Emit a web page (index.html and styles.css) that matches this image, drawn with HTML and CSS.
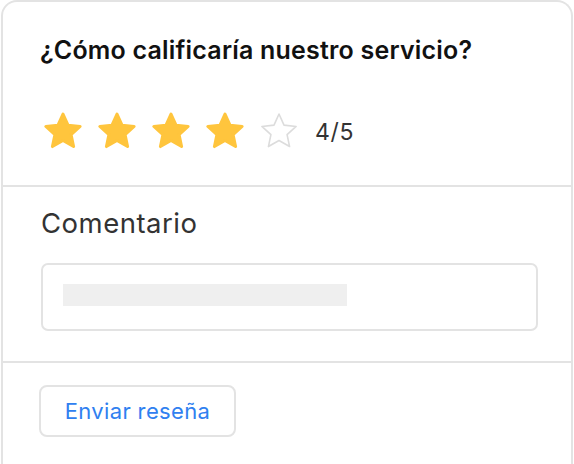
FILE: index.html
```html
<!DOCTYPE html>
<html lang="es">
<head>
<meta charset="utf-8">
<title>Reseña</title>
<link rel="stylesheet" href="styles.css">
</head>
<body>
<div class="card">
  <section class="section rating">
    <h2 class="title">¿Cómo calificaría nuestro servicio?</h2>
    <div class="stars">
      <svg class="star" viewBox="0 0 38 38" width="38" height="38"><path class="full" d="M19 2 L24 13.12 L36.12 14.44 L27.08 22.63 L29.58 34.56 L19 28.5 L8.42 34.56 L10.92 22.63 L1.88 14.44 L14 13.12 Z"/></svg>
      <svg class="star" viewBox="0 0 38 38" width="38" height="38"><path class="full" d="M19 2 L24 13.12 L36.12 14.44 L27.08 22.63 L29.58 34.56 L19 28.5 L8.42 34.56 L10.92 22.63 L1.88 14.44 L14 13.12 Z"/></svg>
      <svg class="star" viewBox="0 0 38 38" width="38" height="38"><path class="full" d="M19 2 L24 13.12 L36.12 14.44 L27.08 22.63 L29.58 34.56 L19 28.5 L8.42 34.56 L10.92 22.63 L1.88 14.44 L14 13.12 Z"/></svg>
      <svg class="star" viewBox="0 0 38 38" width="38" height="38"><path class="full" d="M19 2 L24 13.12 L36.12 14.44 L27.08 22.63 L29.58 34.56 L19 28.5 L8.42 34.56 L10.92 22.63 L1.88 14.44 L14 13.12 Z"/></svg>
      <svg class="star" viewBox="0 0 38 38" width="38" height="38"><path class="empty" d="M19 2 L24 13.12 L36.12 14.44 L27.08 22.63 L29.58 34.56 L19 28.5 L8.42 34.56 L10.92 22.63 L1.88 14.44 L14 13.12 Z"/></svg>
      <span class="score">4/5</span>
    </div>
  </section>
  <section class="section comment">
    <label class="label">Comentario</label>
    <div class="input"><div class="placeholder"></div></div>
  </section>
  <section class="section footer">
    <button class="btn">Enviar reseña</button>
  </section>
</div>
</body>
</html>
```
FILE: styles.css
```css
html, body {
  margin: 0;
  padding: 0;
  background: #ffffff;
}
body {
  font-family: Inter, "Noto Sans", sans-serif;
}
.card {
  margin: 0 0 0 1px;
  width: 572px;
  box-sizing: border-box;
  border: 2px solid #e3e3e3;
  border-bottom: none;
  border-radius: 16px 16px 0 0;
  min-height: 480px;
  background: #fff;
}
.section {
  padding: 0 37px;
}
.rating {
  padding-top: 33px;
  padding-bottom: 35px;
  border-bottom: 2px solid #e3e3e3;
}
.title {
  margin: 0;
  font-size: 25px;
  line-height: 30px;
  font-weight: 600;
  letter-spacing: 0.2px;
  color: #111;
  white-space: nowrap;
}
.stars {
  margin-top: 47px;
  padding-left: 4px;
  display: flex;
  align-items: center;
  gap: 16px;
  height: 38px;
}
.star {
  display: block;
}
.full {
  fill: #ffc53d;
  stroke: #ffc53d;
  stroke-width: 3;
  stroke-linejoin: round;
}
.empty {
  fill: none;
  stroke: #dcdcdc;
  stroke-width: 1.6;
  stroke-linejoin: round;
}
.score {
  margin-left: 1px;
  font-size: 23px;
  letter-spacing: 0.7px;
  color: #333;
  line-height: 38px;
  padding-top: 2px;
}
.comment {
  padding-top: 20px;
  padding-bottom: 30px;
  border-bottom: 2px solid #e3e3e3;
}
.label {
  display: block;
  font-size: 27.5px;
  line-height: 32px;
  letter-spacing: 0.5px;
  color: #333;
  margin-left: 1px;
}
.input {
  margin-top: 24px;
  width: 497px;
  height: 68px;
  box-sizing: border-box;
  border: 2px solid #e3e3e3;
  border-radius: 7px;
  padding: 19px 20px;
  margin-left: 1px;
}
.placeholder {
  width: 284px;
  height: 22px;
  background: #efefef;
}
.footer {
  padding-top: 22px;
  padding-left: 36px;
}
.btn {
  font-family: Inter, "Noto Sans", sans-serif;
  font-size: 22px;
  letter-spacing: 0.35px;
  color: #2f80f0;
  background: #fff;
  border: 2px solid #e3e3e3;
  border-radius: 8px;
  height: 52px;
  width: 197px;
  padding: 0;
  cursor: pointer;
}
```
